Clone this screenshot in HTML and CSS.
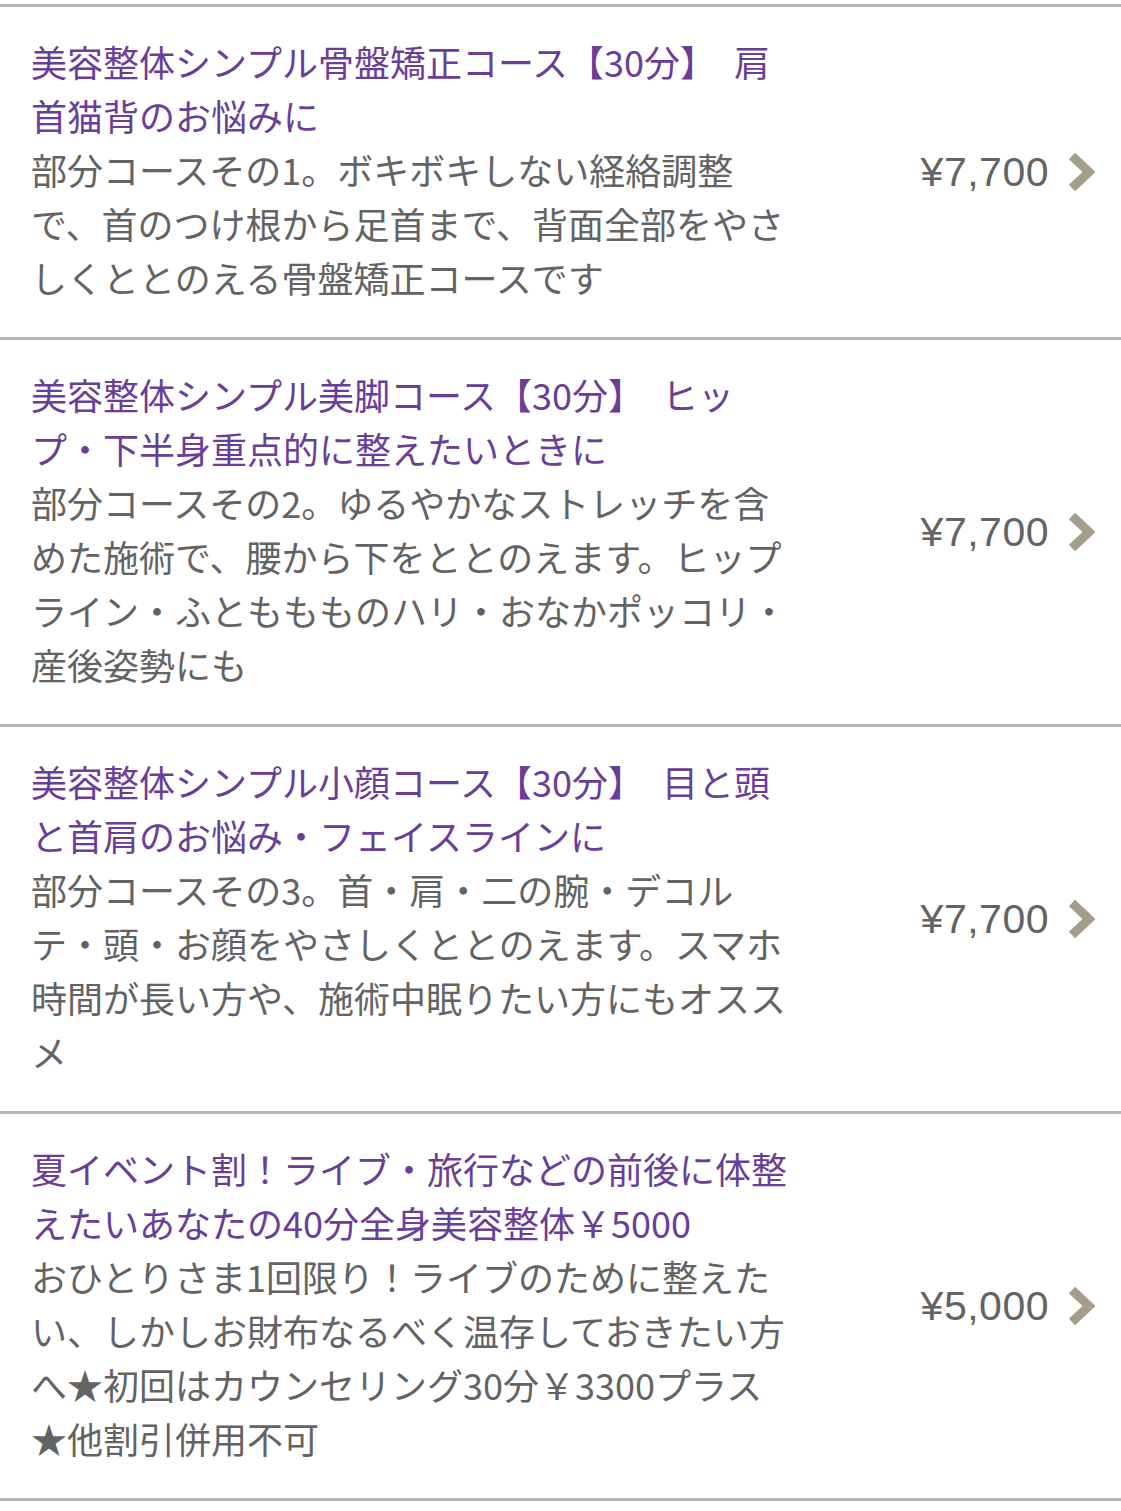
FILE: index.html
```html
<!DOCTYPE html>
<html lang="ja">
<head>
<meta charset="utf-8">
<title>メニュー</title>
<link rel="stylesheet" href="styles.css">
</head>
<body>
  <ul class="menu-list">
    <li class="menu-item">
      <div class="menu-text">
        <p class="menu-title">美容整体シンプル骨盤矯正コース【30分】　肩首猫背のお悩みに</p>
        <p class="menu-desc">部分コースその1。ボキボキしない経絡調整で、首のつけ根から足首まで、背面全部をやさしくととのえる骨盤矯正コースです</p>
      </div>
      <div class="menu-price">
        <span>¥7,700</span>
        <svg class="chevron" viewBox="0 0 28 40"><path d="M5 4 L22 20 L5 36"/></svg>
      </div>
    </li>
    <li class="menu-item">
      <div class="menu-text">
        <p class="menu-title">美容整体シンプル美脚コース【30分】　ヒップ・下半身重点的に整えたいときに</p>
        <p class="menu-desc">部分コースその2。ゆるやかなストレッチを含めた施術で、腰から下をととのえます。ヒップライン・ふとももものハリ・おなかポッコリ・産後姿勢にも</p>
      </div>
      <div class="menu-price">
        <span>¥7,700</span>
        <svg class="chevron" viewBox="0 0 28 40"><path d="M5 4 L22 20 L5 36"/></svg>
      </div>
    </li>
    <li class="menu-item">
      <div class="menu-text">
        <p class="menu-title">美容整体シンプル小顔コース【30分】　目と頭と首肩のお悩み・フェイスラインに</p>
        <p class="menu-desc">部分コースその3。首・肩・二の腕・デコルテ・頭・お顔をやさしくととのえます。スマホ時間が長い方や、施術中眠りたい方にもオススメ</p>
      </div>
      <div class="menu-price">
        <span>¥7,700</span>
        <svg class="chevron" viewBox="0 0 28 40"><path d="M5 4 L22 20 L5 36"/></svg>
      </div>
    </li>
    <li class="menu-item">
      <div class="menu-text">
        <p class="menu-title">夏イベント割！ライブ・旅行などの前後に体整えたいあなたの40分全身美容整体￥5000</p>
        <p class="menu-desc">おひとりさま1回限り！ライブのために整えたい、しかしお財布なるべく温存しておきたい方へ★初回はカウンセリング30分￥3300プラス<br>★他割引併用不可</p>
      </div>
      <div class="menu-price">
        <span>¥5,000</span>
        <svg class="chevron" viewBox="0 0 28 40"><path d="M5 4 L22 20 L5 36"/></svg>
      </div>
    </li>
  </ul>
</body>
</html>
```

FILE: styles.css
```css
body {
  margin: 0;
  padding-top: 4px;
  background-color: #FFF;
  font-family: "Noto Sans CJK JP", "Noto Sans", sans-serif;
}

.menu-list {
  list-style: none;
  margin: 0;
  padding: 0;
  border-bottom: 3px solid #b7b7af;
}

.menu-item {
  display: flex;
  align-items: center;
  padding: 27px 26px 33px 31px;
  border-top: 3px solid #b7b7af;
}

.menu-text {
  width: 762px;
  flex: none;
}

.menu-title,
.menu-desc {
  margin: 0;
  font-size: 36px;
  line-height: 54px;
}

.menu-title {
  color: #6a3e98;
}

.menu-desc {
  color: #636363;
}

.menu-price {
  margin-left: auto;
  margin-top: 6px;
  display: flex;
  align-items: center;
  gap: 18px;
  color: #636363;
  font-family: "Liberation Sans", Arial, sans-serif;
  font-size: 41px;
  letter-spacing: 0.5px;
}

.chevron {
  width: 28px;
  height: 40px;
}

.chevron path {
  fill: none;
  stroke: #a59c8a;
  stroke-width: 9;
  stroke-linecap: butt;
  stroke-linejoin: miter;
}
```
